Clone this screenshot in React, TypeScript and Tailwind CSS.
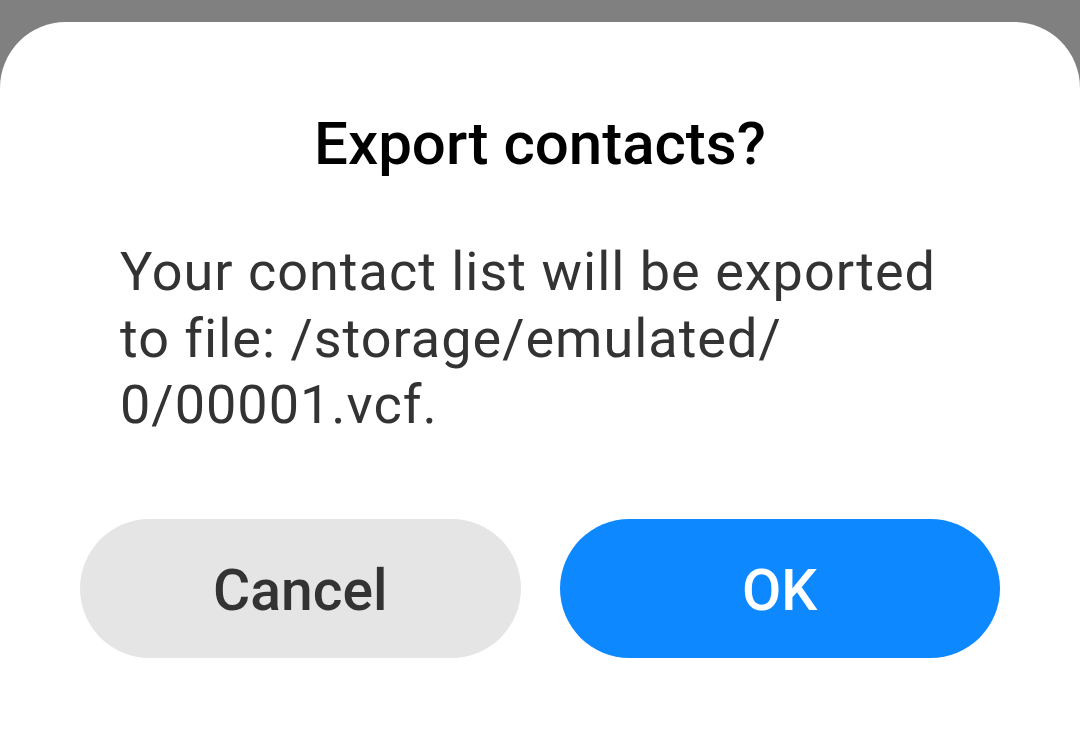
import React from "react";

const App = () => {
    return (
        <div className="h-[733px] w-full bg-[#808080] pt-[22px] flex flex-col font-[Roboto,sans-serif] overflow-hidden">
            <div className="flex-1 bg-white rounded-t-[66px] px-[80px] flex flex-col">
                {/* Title */}
                <h1 className="pt-[82px] text-center text-[60px] leading-[80px] font-medium text-black">
                    Export contacts?
                </h1>

                {/* Message */}
                <p className="mt-[55px] px-[40px] text-[54px] leading-[66.5px] tracking-[1px] text-[#333333]">
                    Your contact list will be exported to file: /storage/emulated/<wbr />0/00001.vcf.
                </p>

                {/* Actions */}
                <div className="mt-[80px] grid grid-cols-2 gap-[39px]">
                    <button className="h-[139px] pt-[6px] rounded-full bg-[#e5e5e5] text-[57px] font-medium text-[#333333]">
                        Cancel
                    </button>
                    <button className="h-[139px] pt-[6px] rounded-full bg-[#0d88fe] text-[57px] font-medium text-white">
                        OK
                    </button>
                </div>
            </div>
        </div>
    );
};

export default App;
